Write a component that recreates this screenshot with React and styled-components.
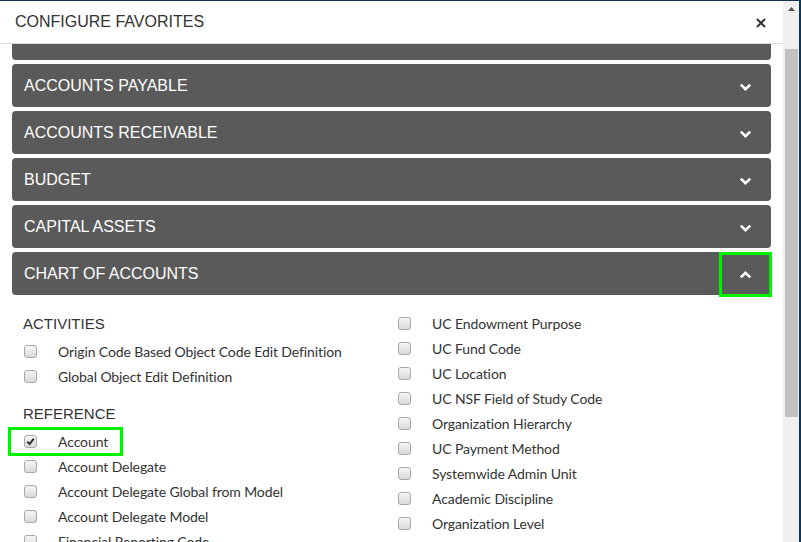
import React, { useLayoutEffect, useRef } from "react";
import styled, { createGlobalStyle } from "styled-components";

const GlobalStyle = createGlobalStyle`
  html, body {
    margin: 0;
    padding: 0;
    height: 100%;
    overflow: hidden;
    background: #0d3552;
  }
  #root {
    height: 100%;
  }
`;

const groups = [
  { title: "ACCOUNTING" },
  { title: "ACCOUNTS PAYABLE" },
  { title: "ACCOUNTS RECEIVABLE" },
  { title: "BUDGET" },
  { title: "CAPITAL ASSETS" },
  { title: "CHART OF ACCOUNTS", open: true, highlighted: true },
];

const leftSections = [
  {
    heading: "ACTIVITIES",
    items: [
      { label: "Origin Code Based Object Code Edit Definition" },
      { label: "Global Object Edit Definition" },
    ],
  },
  {
    heading: "REFERENCE",
    items: [
      { label: "Account", checked: true, highlighted: true },
      { label: "Account Delegate" },
      { label: "Account Delegate Global from Model" },
      { label: "Account Delegate Model" },
      { label: "Financial Reporting Code" },
      { label: "Fund Group" },
      { label: "Higher Education Function" },
      { label: "Object Code" },
      { label: "Object Code Global" },
      { label: "Object Consolidation" },
      { label: "Object Level" },
    ],
  },
];

const rightItems = [
  "UC Endowment Purpose",
  "UC Fund Code",
  "UC Location",
  "UC NSF Field of Study Code",
  "Organization Hierarchy",
  "UC Payment Method",
  "Systemwide Admin Unit",
  "Academic Discipline",
  "Organization Level",
  "Organization Type",
  "Project Code",
  "Responsibility Center",
  "Sub-Account",
  "Sub-Fund Group",
];

const Chevron = ({ up }) => (
  <svg width="13" height="8" viewBox="0 0 13 8" style={{ transform: up ? "rotate(180deg)" : "none" }}>
    <polyline points="1.8,1.6 6.5,6.2 11.2,1.6" fill="none" stroke="#fff" strokeWidth="2.6" />
  </svg>
);

const CloseIcon = () => (
  <svg width="10" height="10" viewBox="0 0 10 10">
    <path d="M1 1 L9 9 M9 1 L1 9" stroke="#333" strokeWidth="2" />
  </svg>
);

const CheckMark = () => (
  <svg width="11" height="11" viewBox="0 0 11 11">
    <polyline points="2.2,5.6 4.6,8 8.8,2.6" fill="none" stroke="#2a2a2a" strokeWidth="1.9" />
  </svg>
);

const UpArrow = () => (
  <svg width="7" height="4" viewBox="0 0 7 4">
    <polygon points="0,4 3.5,0 7,4" fill="#505050" />
  </svg>
);

const CheckRow = ({ label, checked, highlighted }) => (
  <Row highlighted={highlighted}>
    <Box>{checked && <CheckMark />}</Box>
    <Label>{label}</Label>
  </Row>
);

const App = () => {
  const scroller = useRef();

  useLayoutEffect(() => {
    if (scroller.current) scroller.current.scrollTop = 47;
  }, []);

  return (
    <>
      <GlobalStyle />
      <Frame>
        <ScrollArea ref={scroller}>
          <Header>
            <Title>CONFIGURE FAVORITES</Title>
            <CloseButton>
              <CloseIcon />
            </CloseButton>
          </Header>

          <Body>
            {groups.map((g) => (
              <React.Fragment key={g.title}>
                <Panel>
                  <PanelTitle>{g.title}</PanelTitle>
                  <ToggleButton highlighted={g.highlighted}>
                    <Chevron up={g.open} />
                  </ToggleButton>
                </Panel>

                {g.open && (
                  <PanelContent>
                    <Column>
                      {leftSections.map((s) => (
                        <Section key={s.heading}>
                          <GroupHeading>{s.heading}</GroupHeading>
                          {s.items.map((it) => (
                            <CheckRow key={it.label} {...it} />
                          ))}
                        </Section>
                      ))}
                    </Column>
                    <Column>
                      {rightItems.map((label) => (
                        <CheckRow key={label} label={label} />
                      ))}
                    </Column>
                  </PanelContent>
                )}
              </React.Fragment>
            ))}
          </Body>
        </ScrollArea>

        <Rail>
          <RailButton>
            <UpArrow />
          </RailButton>
          <Thumb />
        </Rail>
      </Frame>
    </>
  );
};

const Frame = styled.div`
  height: 100%;
  box-sizing: border-box;
  padding: 1px 2px 0 0;
  display: flex;
`;

const ScrollArea = styled.div`
  flex: 1;
  min-width: 0;
  background: #fff;
  overflow-y: auto;
  scrollbar-width: none;
  &::-webkit-scrollbar {
    display: none;
  }
`;

const Rail = styled.div`
  width: 16px;
  display: flex;
  flex-direction: column;
  background: #f0f0f0;
`;

const RailButton = styled.div`
  height: 17px;
  display: flex;
  align-items: center;
  justify-content: center;
  padding-left: 1px;
  box-sizing: border-box;
  margin-top: -1px;
`;

const Thumb = styled.div`
  height: 368px;
  margin: 32px 1px 0 2px;
  background: #c1c1c1;
`;

const Header = styled.div`
  position: sticky;
  top: 0;
  z-index: 2;
  height: 43px;
  box-sizing: border-box;
  display: flex;
  align-items: center;
  justify-content: space-between;
  padding: 0 17px 0 15px;
  background: #fff;
  border-bottom: 1px solid #dcdcdc;
`;

const Title = styled.h4`
  margin: 0;
  font-family: "Liberation Sans", Arial, sans-serif;
  font-size: 16px;
  font-weight: normal;
  color: #333;
`;

const CloseButton = styled.button`
  border: 0;
  padding: 0;
  background: none;
  display: flex;
  margin-top: 2px;
`;

const Body = styled.div`
  display: flex;
  flex-direction: column;
  gap: 4px;
  padding: 20px 12px 18px;
`;

const Panel = styled.div`
  height: 43px;
  display: flex;
  align-items: flex-start;
  justify-content: space-between;
  padding-left: 12px;
  background: #5a5a5a;
  border-radius: 4px;
`;

const PanelTitle = styled.div`
  align-self: center;
  font-family: "Liberation Sans", Arial, sans-serif;
  font-size: 16px;
  color: #fff;
`;

const ToggleButton = styled.button`
  width: 53px;
  height: 45px;
  margin-right: -1px;
  padding: 0;
  box-sizing: border-box;
  display: flex;
  align-items: center;
  justify-content: center;
  background: transparent;
  border: 3px solid ${(p) => (p.highlighted ? "#00f200" : "transparent")};
`;

const PanelContent = styled.div`
  display: grid;
  grid-template-columns: 374px 1fr;
  padding: 12px 12px 0;
  font-family: Lato, "Open Sans", sans-serif;
  color: #333;
`;

const Column = styled.div`
  display: flex;
  flex-direction: column;
`;

const Section = styled.div`
  display: flex;
  flex-direction: column;
  & + & {
    margin-top: 12px;
  }
`;

const GroupHeading = styled.div`
  height: 25px;
  line-height: 25px;
  margin-bottom: 3px;
  margin-left: -1px;
  font-family: "Liberation Sans", Arial, sans-serif;
  font-size: 15px;
`;

const Row = styled.div`
  display: flex;
  align-items: center;
  width: fit-content;
  box-sizing: border-box;
  height: ${(p) => (p.highlighted ? "29px" : "25px")};
  margin: ${(p) => (p.highlighted ? "-2px 0 -2px -16px" : "0")};
  padding: ${(p) => (p.highlighted ? "0 12px 0 13px" : "0")};
  border: ${(p) => (p.highlighted ? "3px solid #00f200" : "0")};
`;

const Box = styled.span`
  width: 13px;
  height: 13px;
  box-sizing: border-box;
  display: flex;
  align-items: center;
  justify-content: center;
  border: 1px solid #a8a8a8;
  border-radius: 3px;
  background: linear-gradient(#f6f6f6, #d9d9d9);
  margin-right: 21px;
`;

const Label = styled.span`
  font-size: 14px;
  line-height: 1;
  letter-spacing: -0.1px;
`;

export default App;
